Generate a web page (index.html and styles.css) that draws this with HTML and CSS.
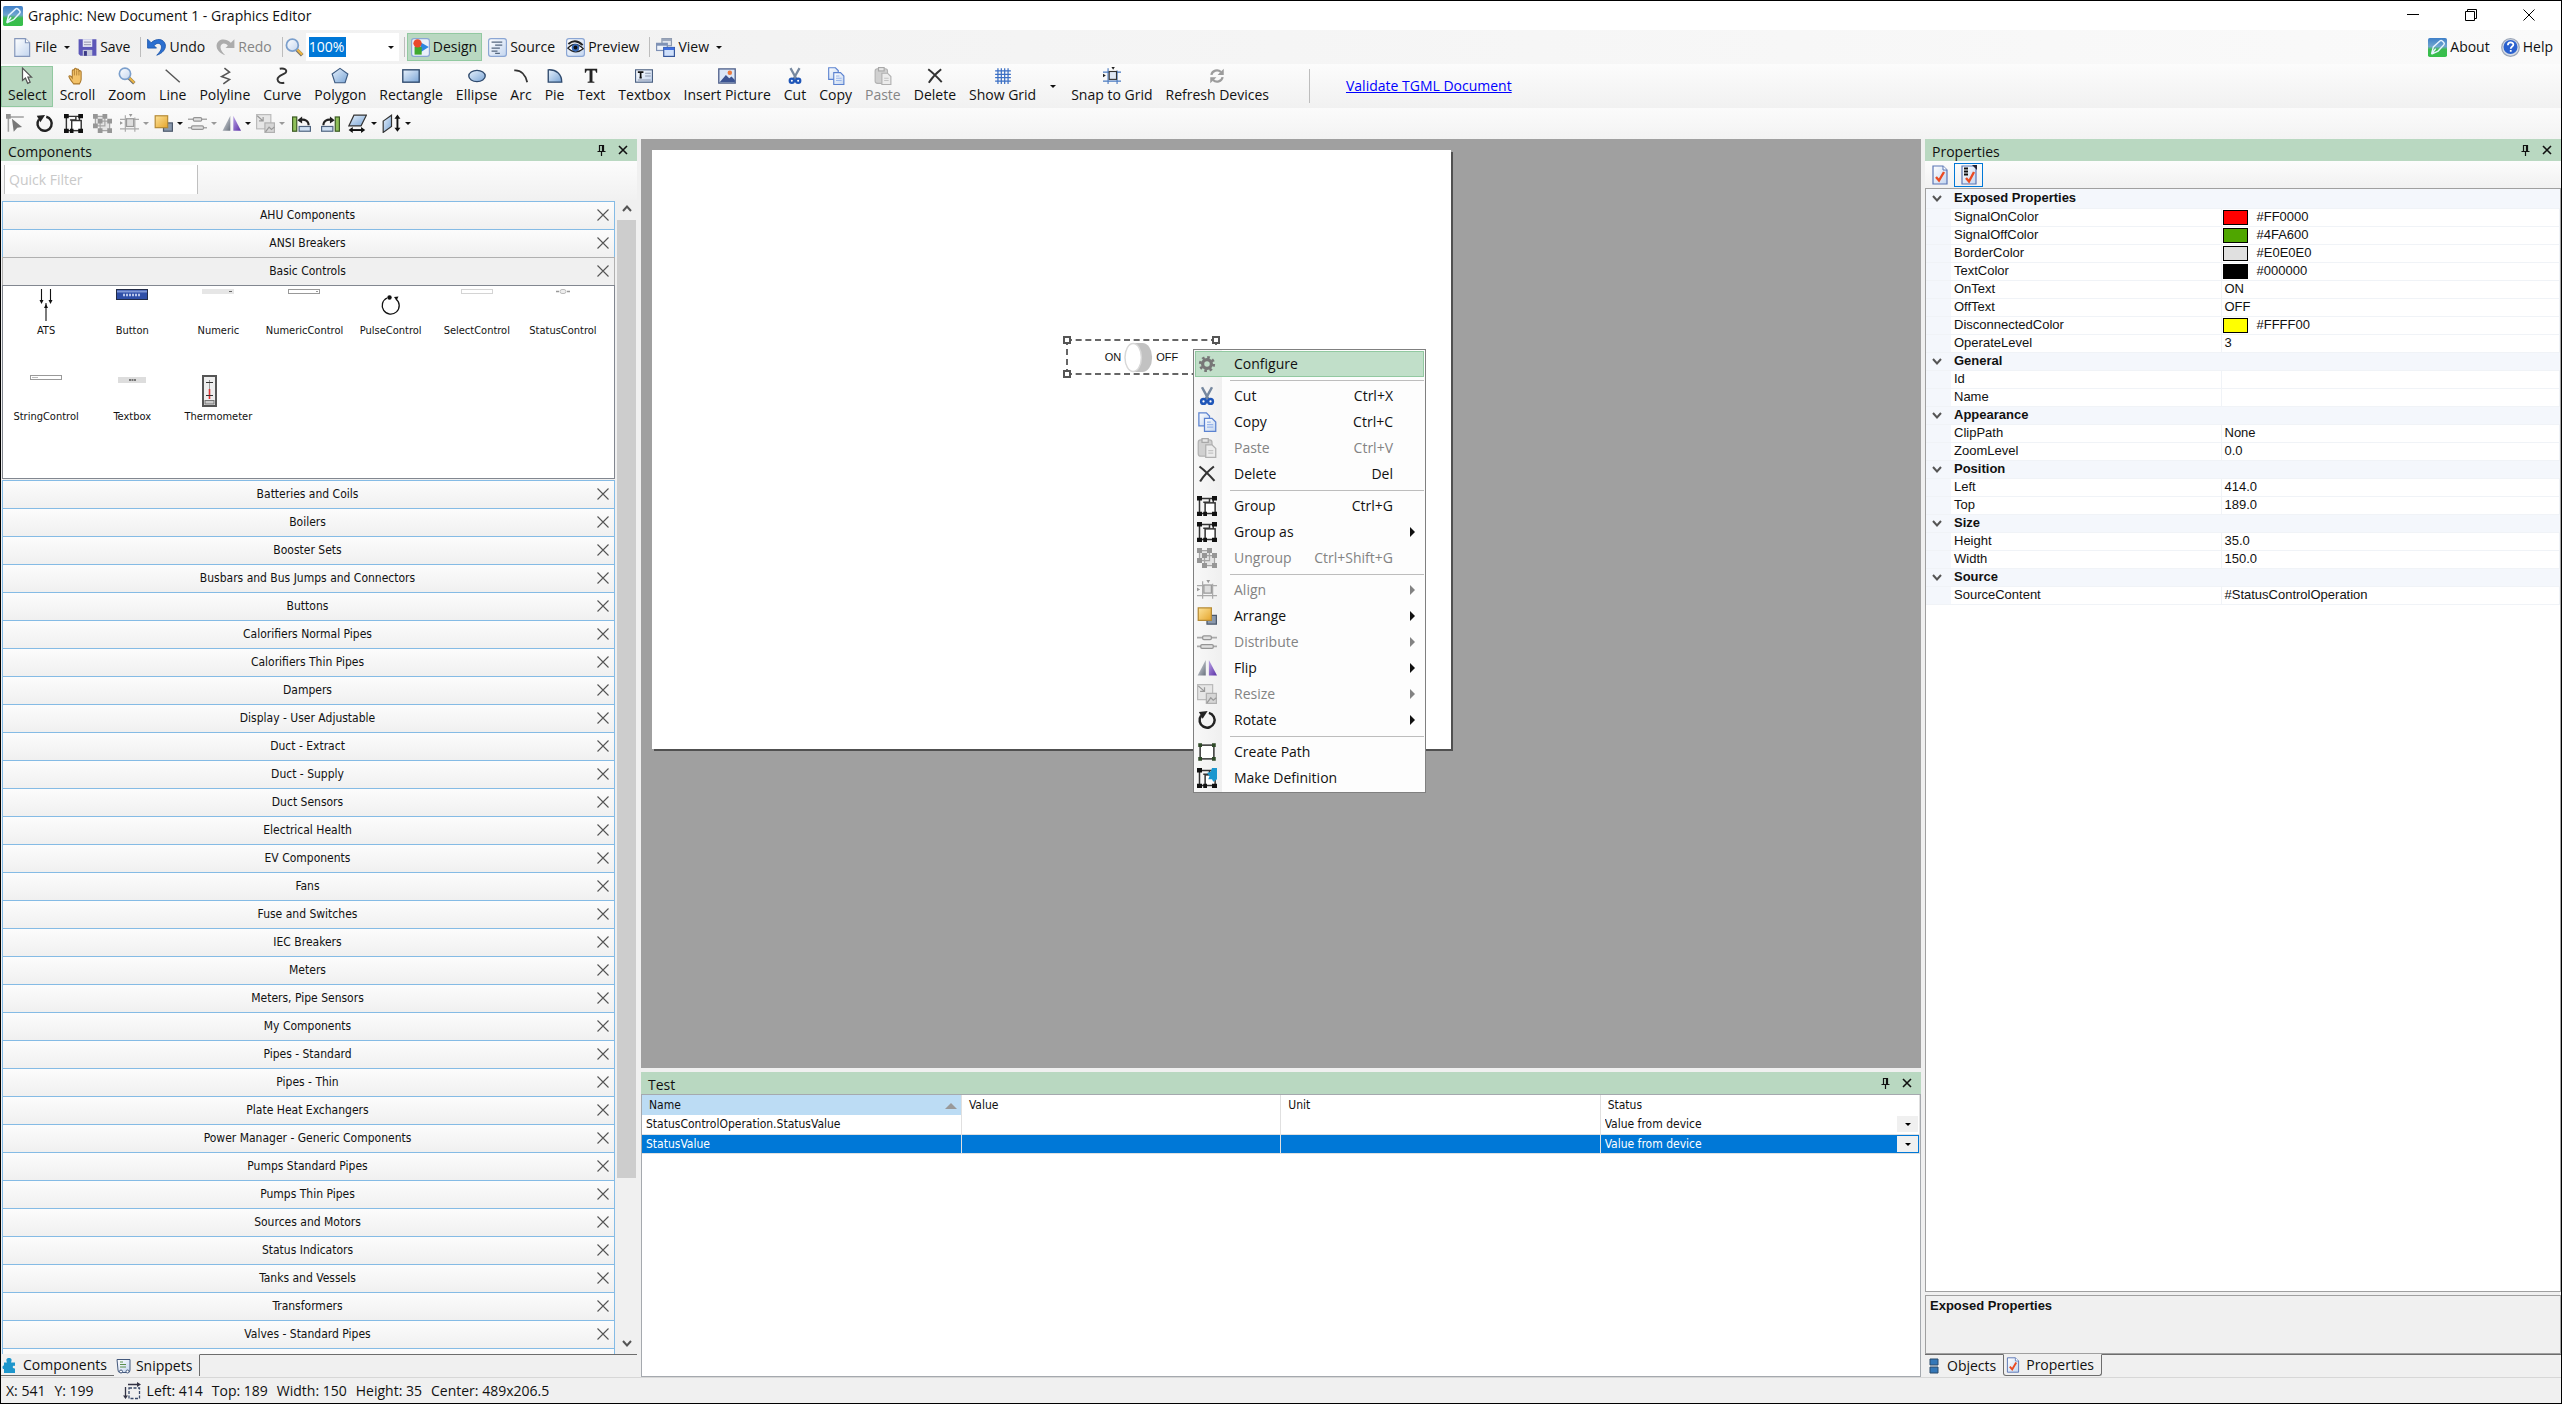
FILE: index.html
```html
<!DOCTYPE html>
<html lang="en">
<head>
  <meta charset="UTF-8">
  <meta name="viewport" content="width=device-width, initial-scale=1.0">
  <title>Graphic: New Document 1 - Graphics Editor</title>
  <link rel="stylesheet" href="styles.css">
</head>
<body>
  <!-- Icon set -->
  <svg class="sprite" aria-hidden="true">
    <defs>
      <linearGradient id="g-blue" x1="0" y1="0" x2="1" y2="1"><stop offset="0" stop-color="#e8f2fc"/><stop offset="1" stop-color="#7aa5d6"/></linearGradient>
      <linearGradient id="g-app" x1="0" y1="0" x2="0" y2="1"><stop offset="0" stop-color="#3f7fc8"/><stop offset=".45" stop-color="#6fa5cf"/><stop offset=".6" stop-color="#3dbb50"/><stop offset="1" stop-color="#35c04a"/></linearGradient>
      <linearGradient id="g-gold" x1="0" y1="0" x2="1" y2="1"><stop offset="0" stop-color="#fde39a"/><stop offset="1" stop-color="#e5a52c"/></linearGradient>
      <linearGradient id="g-gray" x1="0" y1="0" x2="1" y2="1"><stop offset="0" stop-color="#e4e7ec"/><stop offset="1" stop-color="#68707c"/></linearGradient>
      <linearGradient id="g-purple" x1="0" y1="0" x2="1" y2="1"><stop offset="0" stop-color="#b9a2e6"/><stop offset="1" stop-color="#5a2fa5"/></linearGradient>
      <linearGradient id="g-tile" x1="0" y1="0" x2="1" y2="1"><stop offset="0" stop-color="#fff"/><stop offset="1" stop-color="#c3d5ef"/></linearGradient>
    </defs>
    <symbol id="i-app" viewBox="0 0 16 16"><rect width="16" height="16" rx="1.5" fill="url(#g-app)"/><path d="M3 13.500l1.500-6L10 2.500a1.500 1.500 0 0 1 2 0l1.300 1.300a1.500 1.500 0 0 1 0 2L8.500 11 3 13.500l3.500-4.500" fill="none" stroke="#e6f4ff" stroke-width="1.200"/></symbol>
    <symbol id="i-file" viewBox="0 0 16 16"><path d="M1.500.5h9l3.500 3.500V15.500H1.500z" fill="url(#g-tile)" stroke="#8597bb"/><path d="M10.500.5V4H14" fill="#fff" stroke="#8597bb"/></symbol>
    <symbol id="i-save" viewBox="0 0 16 16"><path d="M.5 1h15v14H2L.5 13.500z" fill="#5c57b8"/><path d="M4 1h8v6.500H4z" fill="#e6e8f4"/><path d="M5 3.500h6M5 5.500h6" stroke="#a4a4b8"/><path d="M4 10h8v5H4z" fill="#c5c9dc"/><path d="M5 11h2.500v4H5z" fill="#3a3886"/></symbol>
    <symbol id="i-undo" viewBox="0 0 16 16"><path d="M.5 1v7.500H8L6 6.500C8 3.500 12 4 12.200 7.500c.1 2.500-1.600 4.500-4 7C13 13 15.800 9.500 15.500 6 14.600.5 8-.3 3.500 4z" fill="#2b6fd0" stroke="#1a55ab" stroke-width=".7"/></symbol>
    <symbol id="i-redo" viewBox="0 0 16 16"><path d="M15.500 1v7.500H8L10 6.500C8 3.500 4 4 3.800 7.500c-.1 2.500 1.600 4.500 4 7C3 13 .2 9.500.5 6 1.400.5 8-.3 12.500 4z" fill="#acacac"/></symbol>
    <symbol id="i-zoom" viewBox="0 0 16 16"><path d="M9.500 9.500l5 5" stroke="#6b6b6b" stroke-width="3"/><path d="M10 9.500l4.500 4.500" stroke="#eab444" stroke-width="2"/><circle cx="6.200" cy="6" r="5" fill="url(#g-tile)" stroke="#7b9fcc" stroke-width="1.500"/></symbol>
    <symbol id="i-design" viewBox="0 0 16 16"><rect x=".5" y=".5" width="15" height="15" rx="2" fill="#eaf1fb" stroke="#8ba6d4"/><path d="M8 3.500l7 4-7 4.500z" fill="#2e86e0"/><rect x="3" y="7.500" width="6" height="6.500" fill="#3fa92f"/><circle cx="5.500" cy="4.500" r="3.500" fill="#ea4a2c"/></symbol>
    <symbol id="i-source" viewBox="0 0 16 16"><rect x=".5" y=".5" width="15" height="15" rx="2" fill="url(#g-tile)" stroke="#8ba6d4"/><path d="M3 3.500h9M6 6h6M3 8.500h7M3 11h5M6 13h4" stroke="#55677f" stroke-width="1.100"/></symbol>
    <symbol id="i-preview" viewBox="0 0 16 16"><rect x=".5" y=".5" width="15" height="15" rx="2" fill="url(#g-tile)" stroke="#8ba6d4"/><path d="M1.500 8.500Q7.500 2 14.500 9 8 14.500 1.500 8.500z" fill="#fff" stroke="#222"/><path d="M2 5Q8 0 14 6" fill="none" stroke="#222" stroke-width="1.600"/><circle cx="8" cy="8.300" r="3.200" fill="#3668b4"/><circle cx="8" cy="8" r="1.600" fill="#111"/></symbol>
    <symbol id="i-view" viewBox="0 0 16 16"><rect x="5" y=".5" width="8" height="6" fill="#dfe4ec" stroke="#8c98ad"/><path d="M5 1.500h8" stroke="#9aa6bb" stroke-width="2"/><rect x=".5" y="4.500" width="9" height="6" fill="#eef3fa" stroke="#7e91b5"/><path d="M.5 5.500h9" stroke="#7e91b5" stroke-width="2"/><rect x="6.500" y="8" width="9" height="7.500" fill="#cfe0fb" stroke="#35569b"/><path d="M6.500 9h9" stroke="#3f6fe0" stroke-width="2.200"/></symbol>
    <symbol id="i-help" viewBox="0 0 16 16"><circle cx="8" cy="8" r="7.400" fill="#d5dbe6" stroke="#9aa5b8"/><circle cx="8" cy="7.600" r="5.900" fill="#2a61cf"/><path d="M5.800 6c0-3 4.600-3 4.600-.4 0 1.600-2.200 1.600-2.200 3.400M8.200 10v1.600" fill="none" stroke="#fff" stroke-width="1.500"/></symbol>

    <symbol id="i-select" viewBox="0 0 16 16"><path d="M4 1v11l2.600-2.200 2 4.700 2.200-1-2-4.500H12z" fill="#fff" stroke="#555" stroke-width="1.100"/></symbol>
    <symbol id="i-hand" viewBox="0 0 16 16"><path d="M5 15C3.500 13 1 10 .8 8.300c.6-1 2-.3 3 1.400V3.300c.3-1.300 1.700-1.200 1.900 0V2c.3-1.300 1.800-1.200 2 0v.7c.4-1.200 1.800-1.100 2 .2v1c.4-1 1.900-.9 2 .4v6.500c0 2-1 3-1.500 4.200z" fill="#f3c268" stroke="#a8762a" stroke-width=".9"/><path d="M5.700 3.500v4M7.700 3v4.500M9.700 3.500v4" stroke="#a8762a" stroke-width=".7"/></symbol>
    <symbol id="i-line" viewBox="0 0 16 16"><path d="M1.500 2.500L14 13.500" stroke="#555" stroke-width="1.300"/></symbol>
    <symbol id="i-polyline" viewBox="0 0 16 16"><path d="M7.500 1l4.500 3.500-7 4L12 11l-5.500 4" fill="none" stroke="#555" stroke-width="1.400"/></symbol>
    <symbol id="i-curve" viewBox="0 0 16 16"><path d="M6 1.500c4-.8 7 1 5.300 3.500C9.500 7 4 7.500 4 11c.3 3 3 3.500 6 3" fill="none" stroke="#333" stroke-width="1.700"/></symbol>
    <symbol id="i-polygon" viewBox="0 0 16 16"><path d="M8 1.200l7 5L12.500 14h-9L1 6.200z" fill="url(#g-blue)" stroke="#3c5a80"/></symbol>
    <symbol id="i-rect" viewBox="0 0 16 16"><rect x=".7" y="2.500" width="14.600" height="11" fill="url(#g-blue)" stroke="#2f4a6d" stroke-width="1.200"/></symbol>
    <symbol id="i-ellipse" viewBox="0 0 16 16"><ellipse cx="8" cy="8" rx="7.300" ry="5" fill="url(#g-blue)" stroke="#2f4a6d" stroke-width="1.200"/></symbol>
    <symbol id="i-arc" viewBox="0 0 16 16"><path d="M2 3c6-.5 10 4 11.500 10.500" fill="none" stroke="#333" stroke-width="1.600"/></symbol>
    <symbol id="i-pie" viewBox="0 0 16 16"><path d="M2 2.500c7-.5 12 4 12 11H2z" fill="url(#g-blue)" stroke="#2f4a6d" stroke-width="1.200"/></symbol>
    <symbol id="i-text" viewBox="0 0 16 16"><path d="M2.500 1.500h11V5H12.600L11.800 3H9.300v9.800l1.700.4v.9H5v-.9l1.700-.4V3H4.200L3.400 5h-.9z" fill="#222"/></symbol>
    <symbol id="i-textbox" viewBox="0 0 16 16"><rect x=".5" y="2.500" width="15" height="11" fill="url(#g-tile)" stroke="#4a5f80"/><path d="M2.500 4.500h5M5 4.500v5M4 9.500h2" stroke="#111" stroke-width="1.500"/><path d="M9 5.500h5M9 8h5M2.500 11.500H14" stroke="#8b96ab"/></symbol>
    <symbol id="i-picture" viewBox="0 0 16 16"><rect x=".7" y="1.700" width="14.600" height="12.600" fill="#dbe7f7" stroke="#51628c" stroke-width="1.200"/><path d="M1.500 13.500L7 7l3 3 2-1.500 3 3v2z" fill="#3b5391"/><circle cx="10.500" cy="5" r="2" fill="#ea7a3f"/></symbol>
    <symbol id="i-cut" viewBox="0 0 16 16"><path d="M4 1l5.200 9.500M12 1L6.800 10.500" stroke="#76889f" stroke-width="2"/><circle cx="5.200" cy="12.300" r="1.900" fill="#fff" stroke="#1f56b8" stroke-width="2"/><circle cx="10.800" cy="12.300" r="1.900" fill="#fff" stroke="#1f56b8" stroke-width="2"/></symbol>
    <symbol id="i-copy" viewBox="0 0 16 16"><path d="M1.500.7h6l2.500 2.500V11H1.500z" fill="url(#g-tile)" stroke="#5b82d0"/><path d="M6 5h6l3 3v7.500H6z" fill="url(#g-tile)" stroke="#5b82d0"/><path d="M8 10h5M8 12h5M8 8h3" stroke="#9ab6ea"/></symbol>
    <symbol id="i-paste" viewBox="0 0 16 16"><rect x="1" y="1.500" width="11" height="13" rx="2" fill="#d0d0d0" stroke="#b3b3b3"/><rect x="4" y=".5" width="5" height="3" fill="#e6e6e6" stroke="#a8a8a8"/><path d="M7 5.500h5l3 3v7H7z" fill="#ececec" stroke="#b0b0b0"/><path d="M9 10h4M9 12h4" stroke="#c4c4c4"/></symbol>
    <symbol id="i-delete" viewBox="0 0 16 16"><path d="M2 2c4 3 8 7 12 11.500M13.500 2C9 5.500 5 10 2.500 14" fill="none" stroke="#333" stroke-width="1.700"/></symbol>
    <symbol id="i-grid" viewBox="0 0 16 16"><path d="M3.500 1v14M6.500 1v14M9.500 1v14M12.500 1v14M1 3.500h14M1 6.500h14M1 9.500h14M1 12.500h14" stroke="#3b6fc4" stroke-width="1.100"/></symbol>
    <symbol id="i-snap" viewBox="0 0 16 16"><path d="M4.500 1v14M12.500 3v12M0 4.500h16M0 12.500h16" stroke="#4a7ac0"/><rect x="5.500" y="4" width="6.500" height="7" fill="#dfe8f5" stroke="#333"/><path d="M0 6l2.500 1.500L0 9zM7.500 0L9 2.500 10.500 0z" fill="#222"/></symbol>
    <symbol id="i-refresh" viewBox="0 0 16 16"><path d="M3 7a5 5 0 0 1 8.500-2.500M13 9a5 5 0 0 1-8.500 2.500" fill="none" stroke="#9c9c9c" stroke-width="2"/><path d="M14 1.500V7H8.500zM2 14.500V9h5.500z" fill="#9c9c9c"/></symbol>

    <symbol id="i-node" viewBox="0 0 16 16"><path d="M2 3v12M2 2.500h13" stroke="#a0a0a0" stroke-width="1.300"/><rect width="4" height="4" fill="#909090"/><path d="M5 4l8.500 7-4 .5L6.500 15z" fill="#777"/></symbol>
    <symbol id="i-rotate" viewBox="0 0 16 16"><path d="M3.300 4.500A6 6 0 1 0 9.500 2.300" fill="none" stroke="#222" stroke-width="2"/><path d="M1.500 1.500L8.500.8 4.500 7z" fill="#222"/></symbol>
    <symbol id="i-group" viewBox="0 0 16 16"><path d="M2 2h11v5M2 2v12M2 14h4M5 5h5M10 2v3" fill="none" stroke="#333" stroke-width="1.200"/><rect x="6.500" y="5.500" width="8" height="8.500" fill="#fff" stroke="#333" stroke-width="1.200"/><path d="M0 0h4v3.500H0zM12 0h4v3.500h-4zM0 12.500h4V16H0zM12 12.500h4V16h-4zM5 12.500h3V16H5z" fill="#111"/></symbol>
    <symbol id="i-ungroup" viewBox="0 0 16 16"><path d="M2 2h8v8H2zM6 6h8v8H6z" fill="#e4e4e4" stroke="#a5a5a5"/><path d="M0 0h4v4H0zM8 0h4v4H8zM0 8h4v4H0zM4 4h4v4H4zM12 4h4v4h-4zM4 12h4v4H4zM12 12h4v4h-4z" fill="#969696"/></symbol>
    <symbol id="i-align" viewBox="0 0 16 16"><path d="M4.500 1v14M12.500 3v12M0 4.500h16M0 12.500h16" stroke="#aaa"/><rect x="5.500" y="4" width="6" height="6.500" fill="#ddd" stroke="#999"/><path d="M0 6l2.500 1.500L0 9zM7.500 0L9 2.500 10.500 0z" fill="#999"/></symbol>
    <symbol id="i-arrange" viewBox="0 0 16 16"><rect x="8" y="7.500" width="7.500" height="7" fill="#8a99ad" stroke="#4c596c"/><rect x="1" y="1.500" width="10.500" height="10" fill="url(#g-gold)" stroke="#b58a35"/></symbol>
    <symbol id="i-distribute" viewBox="0 0 16 16"><path d="M0 4.500h16M0 11.500h16" stroke="#a9a9a9" stroke-width="1.300"/><rect x="4.500" y="3" width="7" height="3" rx="1" fill="#e0e0e0" stroke="#959595"/><rect x="3" y="10" width="10" height="3" rx="1" fill="#e0e0e0" stroke="#959595"/></symbol>
    <symbol id="i-flip" viewBox="0 0 16 16"><path d="M7 1.500v12.500H.5z" fill="url(#g-gray)"/><path d="M9.500 1.500V14H16z" fill="url(#g-purple)"/></symbol>
    <symbol id="i-resize" viewBox="0 0 16 16"><rect x=".5" y=".5" width="12" height="12" fill="#e6e6e6" stroke="#bbb"/><rect x="7.500" y="7.500" width="8" height="8" fill="#d6d6d6" stroke="#b0b0b0"/><path d="M1 1.500l4.500 4M2.500 5.800h3.500V2.500M8 15l3-4 2 2 2.500-2" fill="none" stroke="#999"/></symbol>
    <symbol id="i-rotleft" viewBox="0 0 16 16"><rect x=".5" y="2.500" width="3.500" height="12" fill="#8fc05a" stroke="#3c5a23"/><rect x="6" y="10.500" width="9.500" height="4" fill="#cfe0f2" stroke="#4f6480"/><path d="M7 5c4-1 7 1 7 4.500" fill="none" stroke="#222" stroke-width="1.700"/><path d="M4.500 5.200L8.500 2v6z" fill="#222"/></symbol>
    <symbol id="i-rotright" viewBox="0 0 16 16"><rect x="12" y="2.500" width="3.500" height="12" fill="#8fc05a" stroke="#3c5a23"/><rect x=".5" y="10.500" width="9.500" height="4" fill="#cfe0f2" stroke="#4f6480"/><path d="M9 5c-4-1-7 1-7 4.500" fill="none" stroke="#222" stroke-width="1.700"/><path d="M11.500 5.200L7.500 2v6z" fill="#222"/></symbol>
    <symbol id="i-skewh" viewBox="0 0 16 16"><path d="M5 1h10.500L11 10H.7z" fill="url(#g-blue)" stroke="#333"/><path d="M3 13.500h9" stroke="#111" stroke-width="1.600"/><path d="M.5 13.500L4 11v5zM14.500 13.500L11 11v5z" fill="#111"/></symbol>
    <symbol id="i-skewv" viewBox="0 0 16 16"><path d="M1 6l7-5v9.500L1 15.500z" fill="url(#g-blue)" stroke="#333"/><path d="M13 3v9" stroke="#111" stroke-width="1.600"/><path d="M13 .5L10.500 4h5zM13 15l-2.500-3.500h5z" fill="#111"/></symbol>
    <symbol id="i-gear" viewBox="0 0 16 16"><circle cx="8" cy="8" r="5.400" fill="none" stroke="#777" stroke-width="2.200" stroke-dasharray="2.120 2.120"/><circle cx="8" cy="8" r="3.500" fill="none" stroke="#777" stroke-width="2.600"/></symbol>
    <symbol id="i-path" viewBox="0 0 16 16"><rect x="2.500" y="2.500" width="11" height="11" fill="#fff" stroke="#333" stroke-width="1.200"/><path d="M1 1h3v3H1zM12 1h3v3h-3zM1 12h3v3H1zM12 12h3v3h-3z" fill="#2f4a28"/></symbol>
    <symbol id="i-makedef" viewBox="0 0 16 16"><use href="#i-group"/><path d="M8 4l3-1 1-3h4v9l-3 2-1-2H9l1-2.500z" fill="#1b97cf"/></symbol>

    <symbol id="i-pin" viewBox="0 0 12 12"><path d="M3.500 7V1.500h4V7M6.500 1.500V7M1.500 7.500h8M5.500 7.500V12" fill="none" stroke="#111" stroke-width="1.200"/></symbol>
    <symbol id="i-close" viewBox="0 0 12 12"><path d="M2 2l8 8M10 2l-8 8" stroke="#111" stroke-width="1.600"/></symbol>
    <symbol id="i-x" viewBox="0 0 12 12"><path d="M.5.500l11 11M11.500.5l-11 11" stroke="#555" stroke-width="1.100"/></symbol>
    <symbol id="i-up" viewBox="0 0 12 12"><path d="M2 8l4-4.500L10 8" fill="none" stroke="#555" stroke-width="2"/></symbol>
    <symbol id="i-down" viewBox="0 0 12 12"><path d="M2 4l4 4.500L10 4" fill="none" stroke="#555" stroke-width="2"/></symbol>
    <symbol id="i-puzzle" viewBox="0 0 16 16"><path d="M5 5.500C3.500 2 5 1 7 1s3.500 1 2 4.500h4v3.500c-3-1-3 3 0 2.500V16H2v-4C0 12.500 0 8 2 8.500v-3z" fill="#1e96cc"/></symbol>
    <symbol id="i-snippet" viewBox="0 0 16 16"><path d="M2 1.500h13V12q0 2.500-2 2.500H5q-2 0-2-2.500z" fill="url(#g-tile)" stroke="#43587c"/><path d="M5 4h3M5 6.500h6M5 9h6" stroke="#5a8f4a"/><circle cx="6" cy="13.500" r="1.500" fill="#fff" stroke="#43587c"/><circle cx="12.500" cy="13.500" r="1.500" fill="#fff" stroke="#43587c"/></symbol>
    <symbol id="i-check" viewBox="0 0 16 20"><path d="M1 1h10l4 4v14H1z" fill="url(#g-tile)" stroke="#5b76b5" stroke-width="1.200"/><path d="M11 1v4h4" fill="#fff" stroke="#5b76b5"/><path d="M4 12l3 3.500L12 7" fill="none" stroke="#ea4a22" stroke-width="2.400"/></symbol>
    <symbol id="i-checklist" viewBox="0 0 16 20"><path d="M1 1h14v18H1z" fill="url(#g-tile)" stroke="#5b76b5" stroke-width="1.200"/><path d="M3 3.500h4M3 6.500h4M3 9.500h4" stroke="#111" stroke-width="1.800"/><path d="M5 13l3 3.500L13 7" fill="none" stroke="#ea4a22" stroke-width="2.400"/><path d="M11 0h5v5z" fill="#223"/></symbol>
    <symbol id="i-objects" viewBox="0 0 10 16"><path d="M1 1h8v6H1zM1 9h8v6H1z" fill="#3578b8" stroke="#2a4a6a"/></symbol>
    <symbol id="i-bounds" viewBox="0 0 18 18"><path d="M5 2.500h10M2.500 5v10" stroke="#334" stroke-width="1.300"/><path d="M14 0l4 2.500L14 5zM0 13.500L2.500 17 5 13.500z" fill="#334"/><rect x="6" y="6" width="10.500" height="10.500" fill="none" stroke="#3a4a6a" stroke-width="1.300" stroke-dasharray="3 1.500"/></symbol>
  </svg>

  <div class="window">
    <header class="titlebar">
      <svg class="icon"><use href="#i-app"/></svg>
      <h1>Graphic: New Document 1 - Graphics Editor</h1>
      <div class="window-buttons">
        <button aria-label="Minimize"><svg viewBox="0 0 12 12"><path d="M0 5.500h12" stroke="#000"/></svg></button>
        <button aria-label="Restore"><svg viewBox="0 0 12 12"><path d="M.5 2.500h9v9h-9zM2.500 2.500v-2h9v9h-2" fill="none" stroke="#000"/></svg></button>
        <button aria-label="Close"><svg viewBox="0 0 12 12"><path d="M.5.500l11 11M11.500.5l-11 11" stroke="#000"/></svg></button>
      </div>
    </header>

    <!-- Main toolbar -->
    <div class="bar main-bar">
      <button class="menu"><svg class="icon"><use href="#i-file"/></svg>File<i class="caret"></i></button>
      <button><svg class="icon"><use href="#i-save"/></svg>Save</button>
      <span class="sep"></span>
      <button><svg class="icon"><use href="#i-undo"/></svg>Undo</button>
      <button class="off" disabled><svg class="icon"><use href="#i-redo"/></svg>Redo</button>
      <span class="sep"></span>
      <label class="zoom" for="zoomLevel"><svg class="icon"><use href="#i-zoom"/></svg></label>
      <div class="combo"><input type="text" id="zoomLevel" value="100%"><button aria-label="Zoom levels"><i class="caret"></i></button></div>
      <span class="sep"></span>
      <button class="active"><svg class="icon"><use href="#i-design"/></svg>Design</button>
      <button><svg class="icon"><use href="#i-source"/></svg>Source</button>
      <button><svg class="icon"><use href="#i-preview"/></svg>Preview</button>
      <span class="sep"></span>
      <button class="menu"><svg class="icon"><use href="#i-view"/></svg>View<i class="caret"></i></button>
      <span class="spacer"></span>
      <button><svg class="icon"><use href="#i-app"/></svg>About</button>
      <button><svg class="icon"><use href="#i-help"/></svg>Help</button>
    </div>

    <!-- Drawing tools -->
    <div class="bar tool-bar">
      <button class="active"><svg class="icon"><use href="#i-select"/></svg>Select</button>
      <button><svg class="icon"><use href="#i-hand"/></svg>Scroll</button>
      <button><svg class="icon"><use href="#i-zoom"/></svg>Zoom</button>
      <button><svg class="icon"><use href="#i-line"/></svg>Line</button>
      <button><svg class="icon"><use href="#i-polyline"/></svg>Polyline</button>
      <button><svg class="icon"><use href="#i-curve"/></svg>Curve</button>
      <button><svg class="icon"><use href="#i-polygon"/></svg>Polygon</button>
      <button><svg class="icon"><use href="#i-rect"/></svg>Rectangle</button>
      <button><svg class="icon"><use href="#i-ellipse"/></svg>Ellipse</button>
      <button><svg class="icon"><use href="#i-arc"/></svg>Arc</button>
      <button><svg class="icon"><use href="#i-pie"/></svg>Pie</button>
      <button><svg class="icon"><use href="#i-text"/></svg>Text</button>
      <button><svg class="icon"><use href="#i-textbox"/></svg>Textbox</button>
      <button><svg class="icon"><use href="#i-picture"/></svg>Insert Picture</button>
      <button><svg class="icon"><use href="#i-cut"/></svg>Cut</button>
      <button><svg class="icon"><use href="#i-copy"/></svg>Copy</button>
      <button class="off" disabled><svg class="icon"><use href="#i-paste"/></svg>Paste</button>
      <button><svg class="icon"><use href="#i-delete"/></svg>Delete</button>
      <button><svg class="icon"><use href="#i-grid"/></svg>Show Grid</button>
      <button class="drop" aria-label="Grid options"><i class="caret"></i></button>
      <button><svg class="icon"><use href="#i-snap"/></svg>Snap to Grid</button>
      <button><svg class="icon"><use href="#i-refresh"/></svg>Refresh Devices</button>
      <span class="sep"></span>
      <a href="#">Validate TGML Document</a>
    </div>

    <!-- Arrange tools -->
    <div class="bar arrange-bar">
      <button aria-label="Edit nodes"><svg class="icon"><use href="#i-node"/></svg></button>
      <button aria-label="Rotate"><svg class="icon"><use href="#i-rotate"/></svg></button>
      <button aria-label="Group"><svg class="icon"><use href="#i-group"/></svg></button>
      <button aria-label="Ungroup"><svg class="icon"><use href="#i-ungroup"/></svg></button>
      <button class="off split" aria-label="Align"><svg class="icon"><use href="#i-align"/></svg><i class="caret"></i></button>
      <button class="split" aria-label="Arrange"><svg class="icon"><use href="#i-arrange"/></svg><i class="caret"></i></button>
      <button class="off split" aria-label="Distribute"><svg class="icon"><use href="#i-distribute"/></svg><i class="caret"></i></button>
      <button class="split" aria-label="Flip"><svg class="icon"><use href="#i-flip"/></svg><i class="caret"></i></button>
      <button class="off split" aria-label="Resize"><svg class="icon"><use href="#i-resize"/></svg><i class="caret"></i></button>
      <button aria-label="Rotate left"><svg class="icon"><use href="#i-rotleft"/></svg></button>
      <button aria-label="Rotate right"><svg class="icon"><use href="#i-rotright"/></svg></button>
      <button class="split" aria-label="Skew horizontally"><svg class="icon"><use href="#i-skewh"/></svg><i class="caret"></i></button>
      <button class="split" aria-label="Skew vertically"><svg class="icon"><use href="#i-skewv"/></svg><i class="caret"></i></button>
    </div>

    <main class="workspace">
      <!-- Components panel -->
      <section class="panel components">
        <div class="panel-head">
          <h2>Components</h2>
          <button aria-label="Pin"><svg><use href="#i-pin"/></svg></button>
          <button aria-label="Close"><svg><use href="#i-close"/></svg></button>
        </div>
        <div class="filter"><input type="text" placeholder="Quick Filter" aria-label="Quick Filter"></div>
        <div class="list-area">
          <ul class="groups">
            <li><button>AHU Components</button><button class="x" aria-label="Remove"><svg><use href="#i-x"/></svg></button></li>
            <li><button>ANSI Breakers</button><button class="x" aria-label="Remove"><svg><use href="#i-x"/></svg></button></li>
            <li class="open"><button>Basic Controls</button><button class="x" aria-label="Remove"><svg><use href="#i-x"/></svg></button></li>
            <li class="content">
              <figure><svg viewBox="0 0 32 32"><path d="M11.500 0v13M20.500 0v13M16 14v18" stroke="#111" stroke-width="1.100"/><path d="M9.500 11h4l-2 4zM18.500 11h4l-2 4zM14 19l2-4 2 4z" fill="#111"/></svg><figcaption>ATS</figcaption></figure>
              <figure><svg viewBox="0 0 32 32"><rect x=".5" y=".5" width="31" height="10" fill="#2f4fa8" stroke="#222b45"/><path d="M1 2.500h30" stroke="#7f97d6" stroke-width="2"/><path d="M7 6h18" stroke="#b8c5ea" stroke-width="2.500" stroke-dasharray="2 1"/></svg><figcaption>Button</figcaption></figure>
              <figure><svg viewBox="0 0 32 32"><rect width="32" height="5" fill="#e6e6e6"/><path d="M27 2.500h3" stroke="#666"/></svg><figcaption>Numeric</figcaption></figure>
              <figure><svg viewBox="0 0 32 32"><rect x=".5" y=".5" width="31" height="4" fill="#fff" stroke="#999"/><path d="M28 2.500h2" stroke="#999"/></svg><figcaption>NumericControl</figcaption></figure>
              <figure><svg viewBox="0 0 32 32"><path d="M12 9a8.500 8.500 0 1 0 9 1" fill="none" stroke="#111" stroke-width="1.300"/><circle cx="14.500" cy="8.500" r="2.200" fill="#111"/><path d="M19 8l4.500-.5-2 4z" fill="#111"/></svg><figcaption>PulseControl</figcaption></figure>
              <figure><svg viewBox="0 0 32 32"><rect x=".5" y=".5" width="31" height="4" fill="#fff" stroke="#d4d4d4"/></svg><figcaption>SelectControl</figcaption></figure>
              <figure><svg viewBox="0 0 32 32"><path d="M9 2.500h3M20 2.500h3" stroke="#999" stroke-width="1.500"/><rect x="13" y=".5" width="6" height="4" rx="2" fill="#eee" stroke="#bbb"/></svg><figcaption>StatusControl</figcaption></figure>
              <figure><svg viewBox="0 0 32 32"><rect x=".5" y=".5" width="31" height="4" fill="#fff" stroke="#999"/><path d="M2 2.500h6" stroke="#bbb"/></svg><figcaption>StringControl</figcaption></figure>
              <figure><svg viewBox="0 0 32 32"><rect x="2" y="2" width="28" height="6" fill="#ddd"/><path d="M13 5h7" stroke="#777" stroke-width="2" stroke-dasharray="2 .5"/></svg><figcaption>Textbox</figcaption></figure>
              <figure><svg viewBox="0 0 32 32"><rect x="1" y="1" width="13" height="30" fill="#eee" stroke="#555" stroke-width="2"/><path d="M7.500 5v19" stroke="#999"/><path d="M7.500 14v10" stroke="#d33" stroke-width="1.600"/><path d="M4 7.500h7M4 20.500h7" stroke="#333"/><rect x="3" y="25.500" width="9" height="3.500" fill="#ccc" stroke="#777"/></svg><figcaption>Thermometer</figcaption></figure>
            </li>
            <li><button>Batteries and Coils</button><button class="x" aria-label="Remove"><svg><use href="#i-x"/></svg></button></li>
            <li><button>Boilers</button><button class="x" aria-label="Remove"><svg><use href="#i-x"/></svg></button></li>
            <li><button>Booster Sets</button><button class="x" aria-label="Remove"><svg><use href="#i-x"/></svg></button></li>
            <li><button>Busbars and Bus Jumps and Connectors</button><button class="x" aria-label="Remove"><svg><use href="#i-x"/></svg></button></li>
            <li><button>Buttons</button><button class="x" aria-label="Remove"><svg><use href="#i-x"/></svg></button></li>
            <li><button>Calorifiers Normal Pipes</button><button class="x" aria-label="Remove"><svg><use href="#i-x"/></svg></button></li>
            <li><button>Calorifiers Thin Pipes</button><button class="x" aria-label="Remove"><svg><use href="#i-x"/></svg></button></li>
            <li><button>Dampers</button><button class="x" aria-label="Remove"><svg><use href="#i-x"/></svg></button></li>
            <li><button>Display - User Adjustable</button><button class="x" aria-label="Remove"><svg><use href="#i-x"/></svg></button></li>
            <li><button>Duct - Extract</button><button class="x" aria-label="Remove"><svg><use href="#i-x"/></svg></button></li>
            <li><button>Duct - Supply</button><button class="x" aria-label="Remove"><svg><use href="#i-x"/></svg></button></li>
            <li><button>Duct Sensors</button><button class="x" aria-label="Remove"><svg><use href="#i-x"/></svg></button></li>
            <li><button>Electrical Health</button><button class="x" aria-label="Remove"><svg><use href="#i-x"/></svg></button></li>
            <li><button>EV Components</button><button class="x" aria-label="Remove"><svg><use href="#i-x"/></svg></button></li>
            <li><button>Fans</button><button class="x" aria-label="Remove"><svg><use href="#i-x"/></svg></button></li>
            <li><button>Fuse and Switches</button><button class="x" aria-label="Remove"><svg><use href="#i-x"/></svg></button></li>
            <li><button>IEC Breakers</button><button class="x" aria-label="Remove"><svg><use href="#i-x"/></svg></button></li>
            <li><button>Meters</button><button class="x" aria-label="Remove"><svg><use href="#i-x"/></svg></button></li>
            <li><button>Meters, Pipe Sensors</button><button class="x" aria-label="Remove"><svg><use href="#i-x"/></svg></button></li>
            <li><button>My Components</button><button class="x" aria-label="Remove"><svg><use href="#i-x"/></svg></button></li>
            <li><button>Pipes - Standard</button><button class="x" aria-label="Remove"><svg><use href="#i-x"/></svg></button></li>
            <li><button>Pipes - Thin</button><button class="x" aria-label="Remove"><svg><use href="#i-x"/></svg></button></li>
            <li><button>Plate Heat Exchangers</button><button class="x" aria-label="Remove"><svg><use href="#i-x"/></svg></button></li>
            <li><button>Power Manager - Generic Components</button><button class="x" aria-label="Remove"><svg><use href="#i-x"/></svg></button></li>
            <li><button>Pumps Standard Pipes</button><button class="x" aria-label="Remove"><svg><use href="#i-x"/></svg></button></li>
            <li><button>Pumps Thin Pipes</button><button class="x" aria-label="Remove"><svg><use href="#i-x"/></svg></button></li>
            <li><button>Sources and Motors</button><button class="x" aria-label="Remove"><svg><use href="#i-x"/></svg></button></li>
            <li><button>Status Indicators</button><button class="x" aria-label="Remove"><svg><use href="#i-x"/></svg></button></li>
            <li><button>Tanks and Vessels</button><button class="x" aria-label="Remove"><svg><use href="#i-x"/></svg></button></li>
            <li><button>Transformers</button><button class="x" aria-label="Remove"><svg><use href="#i-x"/></svg></button></li>
            <li><button>Valves - Standard Pipes</button><button class="x" aria-label="Remove"><svg><use href="#i-x"/></svg></button></li>
            <li></li>
          </ul>
          <div class="scrollbar">
            <button aria-label="Scroll up"><svg><use href="#i-up"/></svg></button>
            <div class="track"><div class="thumb"></div></div>
            <button aria-label="Scroll down"><svg><use href="#i-down"/></svg></button>
          </div>
        </div>
        <div class="tabs">
          <button class="current"><svg><use href="#i-puzzle"/></svg>Components</button>
          <button class="last"><svg><use href="#i-snippet"/></svg>Snippets</button>
          <span class="rest"></span>
        </div>
      </section>

      <div class="center">
        <!-- Drawing canvas -->
        <div class="canvas">
          <div class="page">
            <div class="status-control">
              <span>ON</span>
              <svg viewBox="0 0 30 32"><rect x="1" y="1" width="28" height="30" rx="10" ry="14" fill="#c2c2c2"/><ellipse cx="9.500" cy="16" rx="8.500" ry="14.500" fill="#fff" stroke="#d8d8d8" stroke-width="1.500"/></svg>
              <span>OFF</span>
              <i class="handle tl"></i><i class="handle tr"></i><i class="handle bl"></i><i class="handle br"></i>
            </div>
          </div>

          <menu class="context-menu">
            <li><button class="hot"><svg><use href="#i-gear"/></svg><span>Configure</span></button></li>
            <li class="line"></li>
            <li><button><svg><use href="#i-cut"/></svg><span>Cut</span><kbd>Ctrl+X</kbd></button></li>
            <li><button><svg><use href="#i-copy"/></svg><span>Copy</span><kbd>Ctrl+C</kbd></button></li>
            <li><button disabled><svg><use href="#i-paste"/></svg><span>Paste</span><kbd>Ctrl+V</kbd></button></li>
            <li><button><svg><use href="#i-delete"/></svg><span>Delete</span><kbd>Del</kbd></button></li>
            <li class="line"></li>
            <li><button><svg><use href="#i-group"/></svg><span>Group</span><kbd>Ctrl+G</kbd></button></li>
            <li><button class="sub"><svg><use href="#i-group"/></svg><span>Group as</span></button></li>
            <li><button disabled><svg><use href="#i-ungroup"/></svg><span>Ungroup</span><kbd>Ctrl+Shift+G</kbd></button></li>
            <li class="line"></li>
            <li><button class="sub" disabled><svg><use href="#i-align"/></svg><span>Align</span></button></li>
            <li><button class="sub"><svg><use href="#i-arrange"/></svg><span>Arrange</span></button></li>
            <li><button class="sub" disabled><svg><use href="#i-distribute"/></svg><span>Distribute</span></button></li>
            <li><button class="sub"><svg><use href="#i-flip"/></svg><span>Flip</span></button></li>
            <li><button class="sub" disabled><svg><use href="#i-resize"/></svg><span>Resize</span></button></li>
            <li><button class="sub"><svg><use href="#i-rotate"/></svg><span>Rotate</span></button></li>
            <li class="line"></li>
            <li><button><svg><use href="#i-path"/></svg><span>Create Path</span></button></li>
            <li><button><svg><use href="#i-makedef"/></svg><span>Make Definition</span></button></li>
          </menu>
        </div>

        <!-- Test panel -->
        <section class="panel test">
          <div class="panel-head">
            <h2>Test</h2>
            <button aria-label="Pin"><svg><use href="#i-pin"/></svg></button>
            <button aria-label="Close"><svg><use href="#i-close"/></svg></button>
          </div>
          <div class="test-body">
            <table>
              <thead>
                <tr><th class="sorted">Name</th><th>Value</th><th>Unit</th><th>Status</th></tr>
              </thead>
              <tbody>
                <tr><td>StatusControlOperation.StatusValue</td><td></td><td></td><td><select aria-label="Status"><option>Value from device</option></select></td></tr>
                <tr class="selected"><td>StatusValue</td><td></td><td></td><td><select aria-label="Status"><option>Value from device</option></select></td></tr>
              </tbody>
            </table>
          </div>
        </section>
      </div>

      <!-- Properties panel -->
      <section class="panel properties">
        <div class="panel-head">
          <h2>Properties</h2>
          <button aria-label="Pin"><svg><use href="#i-pin"/></svg></button>
          <button aria-label="Close"><svg><use href="#i-close"/></svg></button>
        </div>
        <div class="prop-bar">
          <button aria-label="All properties"><svg><use href="#i-check"/></svg></button>
          <button class="current" aria-label="Exposed properties"><svg><use href="#i-checklist"/></svg></button>
        </div>
        <div class="prop-grid">
          <table>
            <colgroup><col class="gutter"><col class="name"><col></colgroup>
            <tr class="cat"><th><svg><use href="#i-down"/></svg></th><th colspan="2">Exposed Properties</th></tr>
            <tr><td></td><td>SignalOnColor</td><td><i class="swatch red"></i>#FF0000</td></tr>
            <tr><td></td><td>SignalOffColor</td><td><i class="swatch green"></i>#4FA600</td></tr>
            <tr><td></td><td>BorderColor</td><td><i class="swatch silver"></i>#E0E0E0</td></tr>
            <tr><td></td><td>TextColor</td><td><i class="swatch black"></i>#000000</td></tr>
            <tr><td></td><td>OnText</td><td>ON</td></tr>
            <tr><td></td><td>OffText</td><td>OFF</td></tr>
            <tr><td></td><td>DisconnectedColor</td><td><i class="swatch yellow"></i>#FFFF00</td></tr>
            <tr><td></td><td>OperateLevel</td><td>3</td></tr>
            <tr class="cat"><th><svg><use href="#i-down"/></svg></th><th colspan="2">General</th></tr>
            <tr><td></td><td>Id</td><td></td></tr>
            <tr><td></td><td>Name</td><td></td></tr>
            <tr class="cat"><th><svg><use href="#i-down"/></svg></th><th colspan="2">Appearance</th></tr>
            <tr><td></td><td>ClipPath</td><td>None</td></tr>
            <tr><td></td><td>ZoomLevel</td><td>0.0</td></tr>
            <tr class="cat"><th><svg><use href="#i-down"/></svg></th><th colspan="2">Position</th></tr>
            <tr><td></td><td>Left</td><td>414.0</td></tr>
            <tr><td></td><td>Top</td><td>189.0</td></tr>
            <tr class="cat"><th><svg><use href="#i-down"/></svg></th><th colspan="2">Size</th></tr>
            <tr><td></td><td>Height</td><td>35.0</td></tr>
            <tr><td></td><td>Width</td><td>150.0</td></tr>
            <tr class="cat"><th><svg><use href="#i-down"/></svg></th><th colspan="2">Source</th></tr>
            <tr><td></td><td>SourceContent</td><td>#StatusControlOperation</td></tr>
          </table>
        </div>
        <div class="prop-help">Exposed Properties</div>
        <div class="tabs">
          <button><svg><use href="#i-objects"/></svg>Objects</button>
          <button class="current boxed"><svg><use href="#i-check"/></svg>Properties</button>
          <span class="rest"></span>
        </div>
      </section>
    </main>

    <footer class="statusbar">
      <span>X: 541</span><span>Y: 199</span>
      <svg><use href="#i-bounds"/></svg>
      <span>Left: 414</span><span>Top: 189</span><span>Width: 150</span><span>Height: 35</span><span>Center: 489x206.5</span>
    </footer>
  </div>
</body>
</html>
```
FILE: styles.css
```css
* {
  box-sizing: border-box;
  margin: 0;
  padding: 0;
}

body {
  font-family: "Open Sans", "Noto Sans", sans-serif;
  font-size: 14px;
  line-height: 20px;
  color: #111;
  background: #f0f0f0;
}

button {
  font: inherit;
  color: inherit;
  background: none;
  border: none;
}

ul, menu {
  list-style: none;
}

.sprite {
  position: absolute;
  width: 0;
  height: 0;
}

.window {
  display: flex;
  flex-direction: column;
  height: 100vh;
  border: 1px solid #000;
}

/* Title bar */
.titlebar {
  display: flex;
  align-items: center;
  height: 29px;
  padding: 0 3px 0 2px;
  background: #fff;
}

.titlebar h1 {
  flex: 1;
  margin-left: 5px;
  font-size: 14px;
  font-weight: normal;
}

.icon {
  width: 18px;
  height: 18px;
  flex: none;
}

.titlebar .icon {
  width: 20px;
  height: 20px;
}

.window-buttons {
  display: flex;
}

.window-buttons button {
  width: 58px;
  height: 28px;
}

.window-buttons svg {
  width: 12px;
  height: 12px;
}

/* Toolbars */
.bar {
  display: flex;
  align-items: center;
}

.caret {
  width: 0;
  height: 0;
  border: 3px solid transparent;
  border-top-color: #111;
  border-bottom: none;
}

.off {
  color: #858585;
}

.off .caret {
  border-top-color: #999;
}

.sep {
  width: 1px;
  height: 20px;
  background: #bdbdbd;
}

.main-bar {
  gap: 2px;
  height: 34px;
  padding: 0 3px 0 8px;
  background: linear-gradient(to right, #f0f0f0, #fafafa);
}

.main-bar button {
  display: flex;
  align-items: center;
  gap: 3px;
  height: 28px;
  padding: 0 5px 0 4px;
}

.main-bar .menu {
  padding-right: 2px;
}

.main-bar .icon {
  width: 19px;
  height: 19px;
}

.main-bar .sep {
  margin-left: 3px;
}

.main-bar .caret {
  margin-left: 4px;
}

.active {
  background: #b9d8c1;
  outline: 1px solid #92c9a1;
  outline-offset: -1px;
}

.spacer {
  flex: 1;
}

.zoom {
  display: flex;
}

.combo {
  display: flex;
  align-items: center;
  justify-content: space-between;
  width: 93px;
  height: 28px;
  padding-left: 3px;
  background: #fff;
}

.combo input {
  width: 37px;
  height: 20px;
  border: none;
  font: inherit;
  color: #fff;
  background: #0078d7;
}

.tool-bar {
  height: 44px;
  background: linear-gradient(#fcfcfc, #f1f1f1);
}

.tool-bar button {
  display: flex;
  flex-direction: column;
  align-items: center;
  height: 41px;
  padding: 1px 6px 0 7px;
}

.tool-bar .drop {
  justify-content: center;
  padding: 0 8px;
}

.tool-bar .sep {
  height: 34px;
  margin: 0 36px 0 34px;
}

.tool-bar a {
  color: #00f;
}

.arrange-bar {
  height: 31px;
  background: linear-gradient(#fbfbfb, #f3f3f3);
}

.arrange-bar button {
  display: flex;
  align-items: center;
  justify-content: center;
  width: 29px;
  height: 26px;
}

.arrange-bar .icon {
  width: 19px;
  height: 19px;
}

.arrange-bar .split {
  width: 34px;
  gap: 4px;
}

/* Workspace */
.workspace {
  flex: 1;
  min-height: 0;
  display: grid;
  grid-template-columns: 636px 1fr 636px;
  gap: 4px;
}

.panel {
  display: flex;
  flex-direction: column;
  min-height: 0;
}

.panel-head {
  display: flex;
  align-items: center;
  height: 22px;
  flex: none;
  padding: 0 4px 0 7px;
  background: #b9d8c1;
}

.panel-head h2 {
  flex: 1;
  padding-top: 3px;
  font-size: 14px;
  font-weight: normal;
}

.panel-head button {
  width: 21px;
  height: 20px;
  line-height: 0;
}

.panel-head svg {
  width: 12px;
  height: 12px;
}

.filter {
  height: 39px;
  flex: none;
  padding: 4px 3px;
  background: linear-gradient(#fcfcfc, #f1f1f1);
}

.filter input {
  width: 194px;
  height: 29px;
  padding-left: 4px;
  border: solid #c0c0c0;
  border-width: 0 1px;
  font: inherit;
  background: #fff;
}

.filter input::placeholder {
  color: #c9c9c9;
}

.list-area {
  flex: 1;
  min-height: 0;
  display: flex;
  gap: 2px;
}

.groups {
  flex: 1;
  padding: 1px 0 0 1px;
  overflow: hidden;
  font-family: "DejaVu Sans Condensed", "DejaVu Sans", sans-serif;
  font-size: 12px;
  font-stretch: condensed;
}

.groups li {
  display: flex;
  align-items: center;
  height: 28px;
  padding-bottom: 2px;
  border: 1px solid #85bbe5;
  border-bottom: none;
  background: linear-gradient(#fcfcfc, #f0f0f0);
}

.groups li button:first-child {
  flex: 1;
  height: 24px;
  padding-left: 20px;
}

.groups .x {
  width: 22px;
  line-height: 0;
}

.groups .x svg {
  width: 12px;
  height: 12px;
}

.groups .open {
  border-color: #b0b0b0;
  background: #f0f0f0;
}

.groups .content {
  display: grid;
  grid-template-columns: repeat(7, 1fr);
  grid-auto-rows: 86px;
  align-items: start;
  height: 194px;
  margin-bottom: 1px;
  padding: 3px 8px 0 0;
  border: 1px solid #828790;
  background: #fff;
}

.content figure {
  text-align: center;
}

.content svg {
  display: block;
  width: 32px;
  height: 32px;
  margin: 0 auto;
}

.content figcaption {
  font-size: 11px;
}

.scrollbar {
  display: flex;
  flex-direction: column;
  width: 20px;
  padding-right: 1px;
}

.scrollbar button {
  height: 20px;
}

.scrollbar svg {
  width: 12px;
  height: 12px;
}

.track {
  flex: 1;
}

.thumb {
  height: 86%;
  background: #cdcdcd;
}

/* Tabs under the side panels */
.tabs {
  display: flex;
  height: 23px;
  flex: none;
}

.tabs button {
  display: flex;
  align-items: center;
  gap: 5px;
  height: 22px;
  padding: 0 7px 0 1px;
  border-top: 1px solid #6d6d6d;
}

.tabs .current {
  border-top-color: transparent;
  border-bottom: 1px solid #6d6d6d;
}

.tabs .last {
  border-right: 1px solid #6d6d6d;
  border-top-color: transparent;
}

.tabs .boxed {
  border: 1px solid #6d6d6d;
  border-top-color: transparent;
  border-radius: 0 0 3px 3px;
}

.tabs svg {
  width: 16px;
  height: 16px;
}

.tabs .rest {
  flex: 1;
  border-top: 1px solid #6d6d6d;
}

/* Canvas */
.center {
  display: flex;
  flex-direction: column;
  gap: 4px;
  min-width: 0;
}

.canvas {
  position: relative;
  flex: 1;
  padding: 11px;
  background: #a0a0a0;
}

.page {
  position: relative;
  width: 799px;
  height: 599px;
  background: #fff;
  box-shadow: 2px 2px 0 #505050;
}

.status-control {
  position: absolute;
  left: 414px;
  top: 189px;
  display: flex;
  align-items: center;
  justify-content: center;
  gap: 3px;
  width: 151px;
  height: 36px;
  border: 2px dashed #666;
  font-family: "Liberation Sans", Arial, sans-serif;
  font-size: 11px;
}

.status-control svg {
  width: 29px;
  height: 31px;
}

.handle {
  position: absolute;
  width: 8px;
  height: 8px;
  border: 2px solid #555;
  background: #fff;
}

.tl { left: -5px; top: -5px; }
.tr { right: -5px; top: -5px; }
.bl { left: -5px; bottom: -5px; }
.br { right: -5px; bottom: -5px; }

.context-menu {
  position: absolute;
  left: 552px;
  top: 210px;
  width: 233px;
  padding: 1px;
  border: 1px solid #808080;
  background: linear-gradient(to right, #f8f8f8, #efefef 28px, #fdfdfd 28px);
}

.context-menu button {
  display: flex;
  align-items: center;
  width: 100%;
  height: 26px;
  padding: 0 31px 0 2px;
  text-align: left;
}

.context-menu button:disabled {
  color: #838383;
}

.context-menu .hot {
  background: #c1dfc9;
  outline: 1px solid #92c9a1;
  outline-offset: -1px;
}

.context-menu svg {
  width: 20px;
  height: 20px;
  margin-right: 17px;
}

.context-menu span {
  flex: 1;
}

.context-menu kbd {
  font: inherit;
}

.context-menu .sub {
  padding-right: 9px;
}

.context-menu .sub::after {
  content: "";
  border: 5px solid transparent;
  border-left-color: currentColor;
  border-right: none;
}

.context-menu .line {
  height: 1px;
  margin: 3px 0 2px 35px;
  background: #bdbdbd;
}

/* Test panel */
.test {
  height: 305px;
  flex: none;
}

.test-body {
  flex: 1;
  border: 1px solid #a5a9ae;
  background: #fff;
}

.test table {
  width: 100%;
  table-layout: fixed;
  border-collapse: collapse;
  font-family: "DejaVu Sans Condensed", "DejaVu Sans", sans-serif;
  font-size: 12px;
  font-stretch: condensed;
  line-height: 18px;
}

.test th {
  height: 20px;
  padding-left: 7px;
  border-right: 1px solid #e0e0e0;
  text-align: left;
  font-weight: normal;
}

.test .sorted {
  background: #bcdcf4;
}

.sorted::after {
  content: "";
  float: right;
  margin: 7px 4px 0 0;
  border: 6px solid transparent;
  border-top: none;
  border-bottom-color: #999;
}

.test td {
  height: 19px;
  padding: 0 1px 0 4px;
  border-right: 1px solid #e0e0e0;
  border-bottom: 1px solid #e0e0e0;
}

.test .selected {
  color: #fff;
  background: #0078d7;
}

.test select {
  display: block;
  width: 100%;
  height: 16px;
  appearance: none;
  border: none;
  font: inherit;
  line-height: 16px;
  color: inherit;
  background: url("data:image/svg+xml,%3Csvg xmlns='http://www.w3.org/2000/svg' width='21' height='16'%3E%3Crect width='21' height='16' fill='%23f0f0f0'/%3E%3Cpath d='M8 7h6l-3 3z'/%3E%3C/svg%3E") right center no-repeat;
}

/* Properties panel */
.properties {
  font-family: "Liberation Sans", Arial, sans-serif;
}

.properties h2,
.properties .tabs {
  font-family: "Open Sans", "Noto Sans", sans-serif;
}

.prop-bar {
  display: flex;
  align-items: center;
  height: 27px;
  flex: none;
  background: linear-gradient(#fcfcfc, #f1f1f1);
}

.prop-bar button {
  width: 29px;
  height: 24px;
  line-height: 0;
}

.prop-bar .current {
  border: 1px solid #0078d7;
}

.prop-bar svg {
  width: 16px;
  height: 20px;
}

.prop-grid {
  flex: 1;
  border: 1px solid #a0a0a0;
  background: #fff;
}

.prop-grid table {
  width: 100%;
  table-layout: fixed;
  border-collapse: collapse;
  font-size: 13px;
  line-height: 16px;
}

.gutter {
  width: 25px;
}

.name {
  width: 270px;
}

.prop-grid td,
.prop-grid th {
  height: 18px;
  padding: 0 3px;
  text-align: left;
  border-bottom: 1px solid #f0f3f7;
}

.prop-grid tr:first-child th {
  height: 19px;
}

.prop-grid td + td {
  border-right: 1px solid #f0f3f7;
}

.prop-grid td:first-child,
.cat {
  background: #f4f7fc;
}

.cat svg {
  display: block;
  width: 12px;
  height: 12px;
  margin-left: 2px;
}

.swatch {
  float: left;
  width: 25px;
  height: 15px;
  margin: 1px 9px 0 -2px;
  border: 1px solid #000;
}

.red { background: #ff0000; }
.green { background: #4fa600; }
.silver { background: #e0e0e0; }
.black { background: #000000; }
.yellow { background: #ffff00; }

.prop-help {
  height: 59px;
  flex: none;
  margin-top: 3px;
  padding: 2px 4px;
  border: 1px solid #a0a0a0;
  font-size: 13px;
  font-weight: bold;
  line-height: 16px;
}

/* Status bar */
.statusbar {
  display: flex;
  align-items: center;
  gap: 9px;
  height: 26px;
  padding-left: 5px;
  border-top: 1px solid #d7d7d7;
}

.statusbar svg {
  width: 18px;
  height: 18px;
  margin: 0 -3px 0 20px;
}
```
